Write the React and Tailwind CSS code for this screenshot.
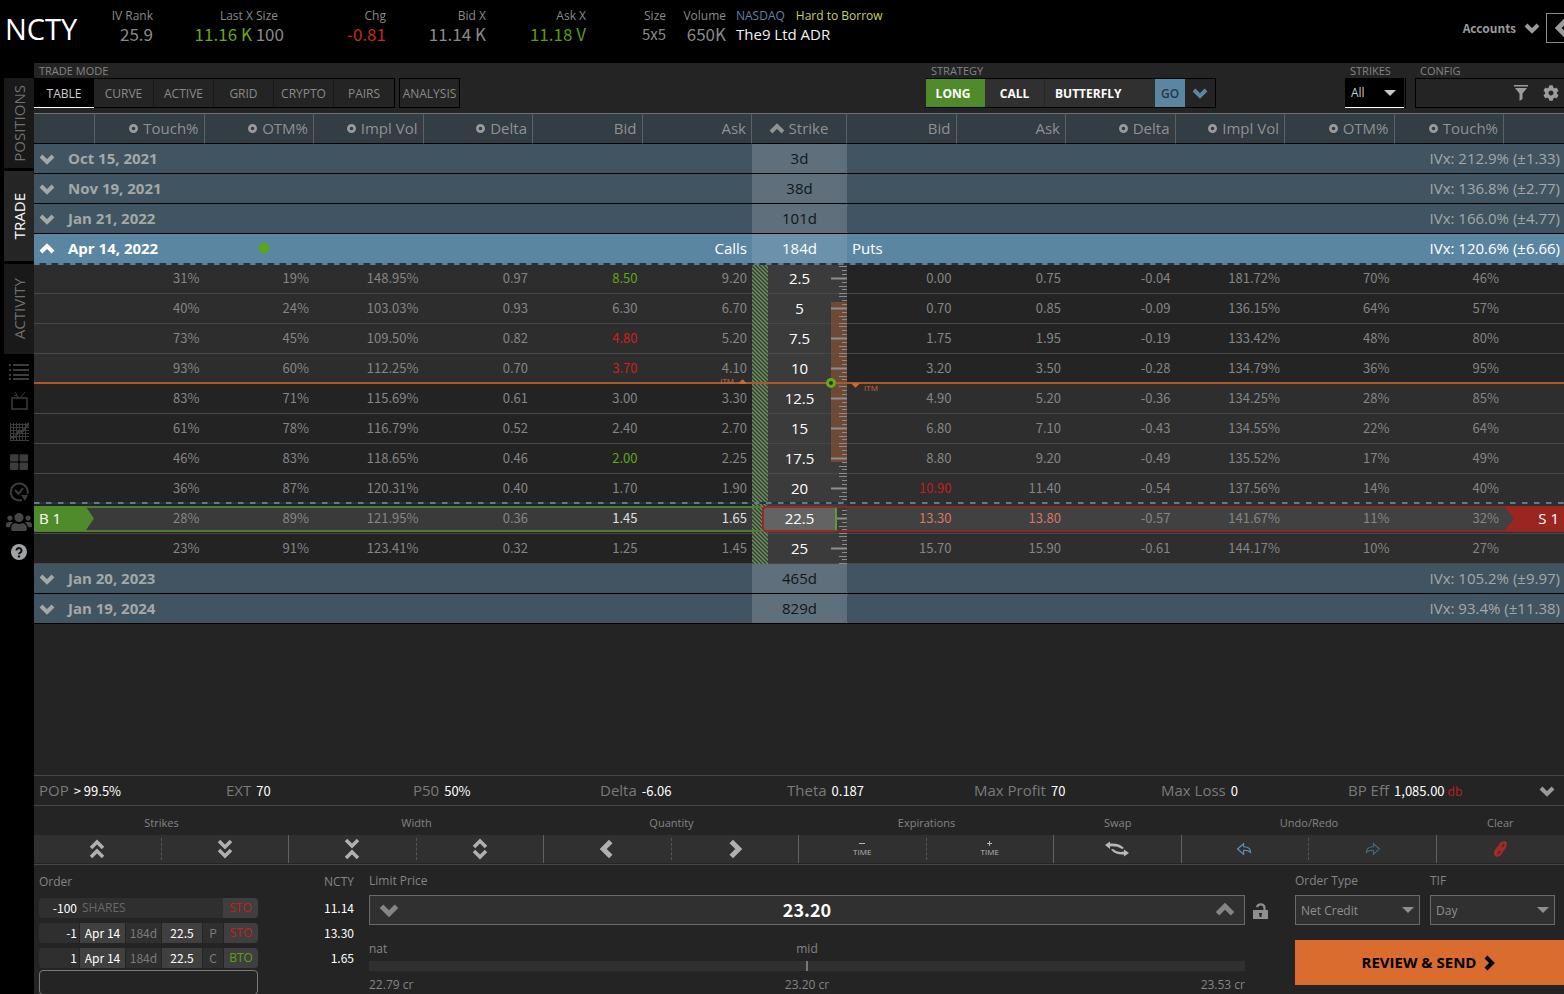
import { FaCog, FaUsers, FaThLarge } from 'react-icons/fa'

const CHEVRON = {
  down: 'M2 5l6 6 6-6',
  up: 'M2 11l6-6 6 6',
  left: 'M11 2L5 8l6 6',
  right: 'M5 2l6 6-6 6',
}

const calls = [
  ['31%', '19%', '148.95%', '0.97', '8.50', '9.20'],
  ['40%', '24%', '103.03%', '0.93', '6.30', '6.70'],
  ['73%', '45%', '109.50%', '0.82', '4.80', '5.20'],
  ['93%', '60%', '112.25%', '0.70', '3.70', '4.10'],
  ['83%', '71%', '115.69%', '0.61', '3.00', '3.30'],
  ['61%', '78%', '116.79%', '0.52', '2.40', '2.70'],
  ['46%', '83%', '118.65%', '0.46', '2.00', '2.25'],
  ['36%', '87%', '120.31%', '0.40', '1.70', '1.90'],
  ['28%', '89%', '121.95%', '0.36', '1.45', '1.65'],
  ['23%', '91%', '123.41%', '0.32', '1.25', '1.45'],
]

const puts = [
  ['0.00', '0.75', '-0.04', '181.72%', '70%', '46%'],
  ['0.70', '0.85', '-0.09', '136.15%', '64%', '57%'],
  ['1.75', '1.95', '-0.19', '133.42%', '48%', '80%'],
  ['3.20', '3.50', '-0.28', '134.79%', '36%', '95%'],
  ['4.90', '5.20', '-0.36', '134.25%', '28%', '85%'],
  ['6.80', '7.10', '-0.43', '134.55%', '22%', '64%'],
  ['8.80', '9.20', '-0.49', '135.52%', '17%', '49%'],
  ['10.90', '11.40', '-0.54', '137.56%', '14%', '40%'],
  ['13.30', '13.80', '-0.57', '141.67%', '11%', '32%'],
  ['15.70', '15.90', '-0.61', '144.17%', '10%', '27%'],
]

const strikes = ['2.5', '5', '7.5', '10', '12.5', '15', '17.5', '20', '22.5', '25']
const SELECTED = 8
const FIRST_OTM_CALL = 4

// last tick direction of a quote, keyed by row and column
const callColors = { '0-4': 'text-[#5fa80f]', '2-4': 'text-[#d0201a]', '3-4': 'text-[#d0201a]', '6-4': 'text-[#5fa80f]', '8-4': 'text-[#e0e0e0]', '8-5': 'text-[#e0e0e0]' }
const putColors = { '7-0': 'text-[#c0201a]', '8-0': 'text-[#d9775f]', '8-1': 'text-[#d9775f]' }

const before = [
  { date: 'Oct 15, 2021', days: '3d', iv: 'IVx: 212.9% (±1.33)' },
  { date: 'Nov 19, 2021', days: '38d', iv: 'IVx: 136.8% (±2.77)' },
  { date: 'Jan 21, 2022', days: '101d', iv: 'IVx: 166.0% (±4.77)' },
]
const after = [
  { date: 'Jan 20, 2023', days: '465d', iv: 'IVx: 105.2% (±9.97)' },
  { date: 'Jan 19, 2024', days: '829d', iv: 'IVx: 93.4% (±11.38)' },
]

const stats = [
  ['POP', '> 99.5%'],
  ['EXT', '70'],
  ['P50', '50%'],
  ['Delta', '-6.06'],
  ['Theta', '0.187'],
  ['Max Profit', '70'],
  ['Max Loss', '0'],
  ['BP Eff', '1,085.00', 'db'],
]

const NUM = "font-['Noto_Sans_CJK_SC','Noto_Sans',sans-serif]"

function Chevron({ dir = 'down', className = 'size-4', width = 4 }) {
  return (
    <svg viewBox="0 0 16 16" className={className} fill="none" stroke="currentColor" strokeWidth={width} aria-hidden="true">
      <path d={CHEVRON[dir]} />
    </svg>
  )
}

function Triangle({ className }) {
  return (
    <svg viewBox="0 0 12 6" className={className} fill="currentColor" aria-hidden="true">
      <path d="M0 0h12L6 6z" />
    </svg>
  )
}

function Quote({ label, value, width, labelClass = '', valueClass = 'text-[#8a8a8a]' }) {
  return (
    <div className={`text-right ${width}`}>
      <div className={`text-xs leading-4 text-[#8a8a8a] ${labelClass}`}>{label}</div>
      <div className={`text-[17px] leading-5 ${NUM} ${valueClass}`}>{value}</div>
    </div>
  )
}

function TopBar() {
  return (
    <header className="flex h-[63px] shrink-0 items-start whitespace-nowrap bg-black pt-2">
      <h1 className="w-[92px] pl-[5px] text-[29px] leading-[42px] text-white">NCTY</h1>
      <Quote label="IV Rank" value="25.9" width="w-[61px]" />
      <Quote
        label="Last X Size"
        labelClass="pr-[6px]"
        value={<><span className="text-[#69a812]">11.16 K</span> 100</>}
        width="w-[131px]"
      />
      <Quote label="Chg" value="-0.81" width="w-[102px]" valueClass="text-[#c42a22]" />
      <Quote label="Bid X" value="11.14 K" width="w-[100px]" />
      <Quote label="Ask X" value="11.18 V" width="w-[100px]" valueClass="text-[#5c9a10]" />
      <div className="w-[80px] text-right text-[#8a8a8a]">
        <div className="text-xs leading-4">Size</div>
        <div className={`text-[15px] leading-5 ${NUM}`}>5x5</div>
      </div>
      <Quote label="Volume" value="650K" width="w-[60px]" />
      <div className="ml-[10px]">
        <div className="flex gap-[11px] text-xs leading-4">
          <span className="text-[#5d84a0]">NASDAQ</span>
          <span className="text-[#c9cf6a]">Hard to Borrow</span>
        </div>
        <div className="text-[15px] leading-5 text-[#f0f0f0]">The9 Ltd ADR</div>
      </div>
      <div className="ml-auto flex h-10 items-center text-[#9a9a9a]">
        <button className={`flex items-center gap-2 text-xs font-bold ${NUM}`}>
          Accounts <Chevron />
        </button>
        <button aria-label="Collapse panel" className="ml-[6px] flex h-[30px] w-[18px] items-center overflow-hidden border border-r-0 border-[#8a8a8a] pl-[5px]">
          <Chevron dir="left" className="size-5 shrink-0" />
        </button>
      </div>
    </header>
  )
}

const sideTab = 'flex h-[90px] w-[30px] items-center justify-center text-[15px] leading-[30px]'

function Sidebar() {
  return (
    <nav className="flex w-[34px] shrink-0 flex-col items-end bg-black pt-[15px] text-[#3c3c3c]">
      <button className={`${sideTab} bg-[#191919] text-[#6f6f6f]`}>
        <span className="rotate-180 [writing-mode:vertical-rl]">POSITIONS</span>
      </button>
      <button className={`${sideTab} mt-[3px] bg-[#252525] text-white`}>
        <span className="rotate-180 [writing-mode:vertical-rl]">TRADE</span>
      </button>
      <button className={`${sideTab} mt-[3px] bg-[#191919] text-[#6f6f6f]`}>
        <span className="rotate-180 [writing-mode:vertical-rl]">ACTIVITY</span>
      </button>
      <div className="mt-[3px] flex w-[30px] flex-col">
        <button aria-label="Watchlist" className="flex h-[30px] items-center justify-center">
          <svg viewBox="0 0 20 18" className="h-[18px] w-5" fill="currentColor">
            <path d="M0 1h2v2H0zM4 1h16v2H4zM0 6h2v2H0zM4 6h16v2H4zM0 11h2v2H0zM4 11h16v2H4zM0 15h2v2H0zM4 15h16v2H4z" />
          </svg>
        </button>
        <button aria-label="Live TV" className="flex h-[30px] items-center justify-center">
          <svg viewBox="0 0 20 20" className="size-5" fill="none" stroke="currentColor">
            <path strokeWidth="1.500" d="M3 6h15v11H3z" />
            <path d="M9 5L6 0M12 5l4-5M5 3l3 1" />
          </svg>
        </button>
        <button aria-label="Charts" className="flex h-[30px] items-center justify-center">
          <svg viewBox="0 0 20 20" className="size-5" fill="none" stroke="currentColor">
            <path d="M1.500 1v18M4.500 1v18M7.500 1v18M10.500 1v18M13.500 1v18M16.500 1v18M1 2.500h19M1 5.500h19M1 8.500h19M1 11.500h19M1 14.500h19M1 18.500h19" />
            <path strokeWidth="2" d="M1 16l5-1 4-6 3 1 6-7" />
            <circle cx="19" cy="2" r="1" fill="currentColor" />
          </svg>
        </button>
        <button aria-label="Dashboard" className="flex h-[30px] items-center justify-center">
          <FaThLarge className="size-[18px]" />
        </button>
        <button aria-label="Quick roll" className="flex h-[30px] items-center justify-center">
          <svg viewBox="0 0 20 20" className="size-5" fill="none" stroke="currentColor" strokeWidth="2">
            <path d="M13 18a8.500 8.500 0 1 1 5.500-6" />
            <path d="M6 8l3.500 4L14 6" />
            <path d="M12 13h7l-3 6z" fill="currentColor" stroke="none" />
          </svg>
        </button>
        <button aria-label="Community" className="flex h-[30px] items-center justify-center">
          <FaUsers className="size-[26px] text-[#464646]" />
        </button>
        <button aria-label="Help" className="flex h-[30px] items-center justify-center">
          <svg viewBox="0 0 16 16" className="size-4">
            <circle cx="8" cy="8" r="8" fill="#a0a3a5" />
            <path d="M5.500 6.500a2.500 2.500 0 1 1 3.800 2.100C8.300 9.200 8 9.500 8 10.300" fill="none" stroke="#111" strokeWidth="2" />
            <circle cx="8" cy="12.400" r="1.200" fill="#111" />
          </svg>
        </button>
      </div>
    </nav>
  )
}

const modeLabel = 'pl-[5px] text-[11px] leading-[15px] text-[#858585]'

function Toolbar() {
  return (
    <div className="flex h-[50px] shrink-0 items-start">
      <div>
        <div className={modeLabel}>TRADE MODE</div>
        <div className="flex h-[30px] text-xs text-[#8a8a8a]">
          <div className="flex border border-l-0 border-black">
            <button className="-my-px w-[60px] border-b border-white bg-black pt-[3px] text-[#d0d0d0]">TABLE</button>
            {['CURVE', 'ACTIVE', 'GRID', 'CRYPTO', 'PAIRS'].map(m => (
              <button key={m} className="w-[60px] border-r border-[#1a1a1a] pt-px last:border-r-0">{m}</button>
            ))}
          </div>
          <button className="ml-1 w-[61px] border border-black pt-px">ANALYSIS</button>
        </div>
      </div>

      <div className="ml-auto">
        <div className={modeLabel}>STRATEGY</div>
        <div className="flex h-[30px] border border-l-0 border-black text-xs font-bold text-white">
          <button className="w-[59px] bg-[#4f8b2b] pr-[5px] pt-px">LONG</button>
          <button className="w-[60px] border-r border-[#262626] bg-[#303030] pt-px">CALL</button>
          <button className="w-[110px] bg-[#303030] pl-[10px] pt-px text-left">BUTTERFLY</button>
          <button className="w-[30px] bg-[#5b86a2] pt-px font-semibold text-[#233846]">GO</button>
          <button aria-label="More strategies" className="flex w-[30px] items-center justify-center text-[#5b86a2]">
            <Chevron />
          </button>
        </div>
      </div>

      <div className="ml-[129px]">
        <label htmlFor="strikes" className={`block ${modeLabel}`}>STRIKES</label>
        <div className="relative h-[30px] w-[61px] border-r border-black text-[#c8c8c8]">
          <select id="strikes" className="h-[30px] w-[59px] appearance-none border-b border-white bg-black pl-[6px] text-xs">
            <option>All</option>
          </select>
          <Triangle className="pointer-events-none absolute right-[9px] top-3 h-[6px] w-3" />
        </div>
      </div>

      <div className="ml-[9px] w-[149px]">
        <div className={modeLabel}>CONFIG</div>
        <div className="flex h-[30px] items-center justify-end gap-[15px] border border-r-0 border-black pr-[5px] text-[#9c9c9c]">
          <button aria-label="Filter">
            <svg viewBox="0 0 14 16" className="h-4 w-[14px]" fill="currentColor">
              <path d="M0 0h14v1.500H0zM1 3h12L8.500 8.500V14l-3 2V8.500z" />
            </svg>
          </button>
          <button aria-label="Settings"><FaCog className="size-4" /></button>
        </div>
      </div>
    </div>
  )
}

const headCell = 'h-[31px] border-b border-b-black border-t border-t-[#6d7072] border-r border-r-[#596268] bg-[#323d44] p-0 pb-[2px] pr-[5px] text-right font-normal'

function HeadCell({ label }) {
  const quote = label === 'Bid' || label === 'Ask'
  return (
    <th className={headCell}>
      <div className="flex items-center justify-end gap-[5px]">
        {!quote && (
          <svg viewBox="0 0 10 10" className="mt-px size-[9px]" fill="none" stroke="#9a9a9a" strokeWidth="3">
            <circle cx="5" cy="5" r="3.500" />
          </svg>
        )}
        {label}
      </div>
    </th>
  )
}

function ExpirationRow({ date, days, iv, open }) {
  const side = open
    ? 'h-[30px] bg-[#5b86a2] p-0 pb-[2px] text-white'
    : 'h-[30px] border-b border-black bg-[#405561] p-0 pb-[2px] text-[#a3a8a8]'
  const mid = open
    ? 'bg-[#6c92ab] p-0 pb-[2px] text-center text-white'
    : 'border-b border-black bg-[#5f707c] p-0 pb-[2px] text-center text-[#10161a]'
  return (
    <tr>
      <td colSpan={7} className={side}>
        <div className="flex items-center">
          <button className="flex items-center gap-[13px] pl-[5px] font-bold">
            <Chevron dir={open ? 'up' : 'down'} className="mt-[2px] size-4" />
            {date}
          </button>
          {open && (
            <>
              <span className="ml-[101px] size-[10px] rounded-full bg-[#5aa70a]" />
              <span className="ml-auto pr-[5px]">Calls</span>
            </>
          )}
        </div>
      </td>
      <td className={mid}>{days}</td>
      <td colSpan={7} className={side}>
        <div className="flex items-center justify-between pl-[5px] pr-1">
          <span>{open && 'Puts'}</span>
          <span>{iv}</span>
        </div>
      </td>
    </tr>
  )
}

function StrikeRow({ i }) {
  const picked = i === SELECTED
  const itmCall = i < FIRST_OTM_CALL
  const line = 'h-[30px] border-b border-[#484848] p-0'
  const callCell = `${line} ${itmCall ? 'bg-[#2d2d2d]' : 'bg-[#232323]'}`
  const putCell = `${line} ${itmCall ? 'bg-[#242424]' : 'bg-[#2e2e2e]'}`
  const num = `pr-[5px] text-right text-[13px] ${NUM}`
  const callBox = picked ? 'h-[26px] border-y-2 border-[#4f7d33] bg-[#3a3a3a] leading-5' : 'pb-[2px] leading-6'
  const putBox = picked ? 'h-[26px] border-y-2 border-[#842a24] bg-[#414141] leading-5' : 'pb-[2px] leading-6'
  return (
    <tr>
      <td className={callCell}>
        {picked && (
          <div className="h-[26px] border-y-2 border-[#4f7d33] bg-[#3a3a3a]">
            <div className="-my-[2px] h-[26px] bg-[#4f8b2b] pl-[5px] leading-6 text-white [clip-path:polygon(0_0,51px_0,60px_50%,51px_100%,0_100%)]">B 1</div>
          </div>
        )}
      </td>
      {calls[i].map((v, c) => (
        <td key={c} className={callCell}>
          <div className={`${num} ${callBox} ${callColors[`${i}-${c}`] || 'text-[#858585]'}`}>{v}</div>
        </td>
      ))}
      <td className={`${line} bg-[#3b3b3b] text-center text-white`}>
        {picked ? (
          <div className="relative z-10 flex h-[26px]">
            <div className="w-[10px] border-y-2 border-[#4f7d33]" />
            <div className="flex-1 rounded-sm border-2 border-[#9a2a26] border-r-[#5d9a3a] bg-[#636363] leading-5">22.5</div>
            <div className="w-[10px] border-y-2 border-[#842a24]" />
          </div>
        ) : (
          <div className="pb-[2px]">{strikes[i]}</div>
        )}
      </td>
      {puts[i].map((v, c) => (
        <td key={c} className={putCell}>
          <div className={`${num} ${putBox} ${putColors[`${i}-${c}`] || 'text-[#858585]'}`}>{v}</div>
        </td>
      ))}
      <td className={putCell}>
        {picked && (
          <div className="h-[26px] border-y-2 border-[#842a24] bg-[#414141]">
            <div className="-my-[2px] h-[26px] bg-[#9a261f] pr-[5px] text-right leading-6 text-white [clip-path:polygon(0_0,100%_0,100%_100%,0_100%,10px_50%)]">S 1</div>
          </div>
        )}
      </td>
    </tr>
  )
}

// hatched call side, price ruler and expected move band over the strike column
function StrikeOverlay() {
  return (
    <svg className="h-[300px] w-[95px]" viewBox="0 0 95 300" aria-hidden="true">
      <defs>
        <pattern id="hatch" width="4" height="4" patternUnits="userSpaceOnUse">
          <path d="M-1 -1l6 6M-1 3l2 2M3 -1l2 2" stroke="#6a9656" strokeWidth="1.300" />
        </pattern>
        <pattern id="ticks" width="16" height="30" patternUnits="userSpaceOnUse" x="79">
          <path d="M8 2.500h8M11 6.500h5M11 10.500h5M11 18.500h5M8 22.500h8M11 25.500h5M8 29.500h8" stroke="#8b8b8b" />
          <path d="M0 14.500h16" stroke="#8e8e8e" strokeWidth="2" />
        </pattern>
      </defs>
      <rect width="16" height="300" fill="url(#hatch)" />
      <rect x="79" y="38" width="16" height="160" fill="#8f5433" fillOpacity=".6" />
      <rect x="79" width="16" height="300" fill="url(#ticks)" />
    </svg>
  )
}

const dashes = 'h-[2px] bg-[repeating-linear-gradient(90deg,#5f7d8f_0,#5f7d8f_5px,#22333f_6px,#22333f_12px)]'

function OptionChain() {
  const heads = ['Touch%', 'OTM%', 'Impl Vol', 'Delta', 'Bid', 'Ask']
  return (
    <div className="relative shrink-0">
      <table className="w-full table-fixed border-separate border-spacing-0 whitespace-nowrap text-[15px] leading-5">
        <colgroup>
          <col className="w-[61px]" />
          {heads.map(h => <col key={h} />)}
          <col className="w-[95px]" />
          {heads.map(h => <col key={h} />)}
          <col className="w-[60px]" />
        </colgroup>
        <thead className="text-[#8f9291]">
          <tr>
            <td className={headCell} />
            {heads.map(h => <HeadCell key={h} label={h} />)}
            <th className={headCell}>
              <div className="flex items-center justify-center gap-1 pl-1">
                <Chevron dir="up" className="mt-[2px] size-4" /> Strike
              </div>
            </th>
            {['Bid', 'Ask', 'Delta', 'Impl Vol', 'OTM%', 'Touch%'].map(h => <HeadCell key={h} label={h} />)}
            <td className={`${headCell} border-r-0`} />
          </tr>
        </thead>
        <tbody>
          {before.map(e => <ExpirationRow key={e.date} {...e} />)}
          <ExpirationRow date="Apr 14, 2022" days="184d" iv="IVx: 120.6% (±6.66)" open />
          {strikes.map((s, i) => <StrikeRow key={s} i={i} />)}
          {after.map(e => <ExpirationRow key={e.date} {...e} />)}
        </tbody>
      </table>

      <div className="pointer-events-none absolute inset-x-0 top-[151px] h-[300px]">
        <div className="flex justify-center pl-px"><StrikeOverlay /></div>
        <div className={`absolute inset-x-0 -top-px ${dashes}`} />
        <div className={`absolute inset-x-0 top-[238px] ${dashes}`} />
        <div className="absolute inset-x-0 top-[118px] flex h-[2px] items-center justify-center bg-[#a9592f] text-[#cf6a34]">
          <div className="mb-1 mr-[5px] flex flex-1 items-center justify-end gap-1 text-[8px] leading-[8px]">
            ITM <Triangle className="h-[5px] w-[9px] rotate-180" />
          </div>
          <div className="flex w-[95px] shrink-0 justify-end pr-[11px]">
            <svg viewBox="0 0 10 10" className="size-[10px]" fill="#263010" stroke="#68a812" strokeWidth="3">
              <circle cx="5" cy="5" r="3.500" />
            </svg>
          </div>
          <div className="ml-1 mt-[9px] flex flex-1 items-start gap-1 text-[8px] leading-[10px]">
            <Triangle className="h-[5px] w-[9px]" /> ITM
          </div>
        </div>
      </div>
    </div>
  )
}

function StatsBar() {
  return (
    <div className="flex h-[31px] shrink-0 items-center border-y border-[#454545]">
      <dl className="grid flex-1 grid-cols-8 whitespace-nowrap">
        {stats.map(([label, value, unit]) => (
          <div key={label} className="flex items-baseline gap-[5px] pl-[5px] leading-5">
            <dt className="text-[15px] text-[#7a7a7a]">{label}</dt>
            <dd className={`text-[13px] text-white ${NUM}`}>
              {value} {unit && <span className="text-xs text-[#b3201c]">{unit}</span>}
            </dd>
          </div>
        ))}
      </dl>
      <button aria-label="More metrics" className="flex w-[34px] justify-center text-[#9a9a9a]"><Chevron /></button>
    </div>
  )
}

function DoubleChevron({ paths }) {
  return (
    <svg viewBox="0 0 16 22" className="h-[22px] w-4" fill="none" stroke="#b0b0b0" strokeWidth="3.500" aria-hidden="true">
      <path d={paths} />
    </svg>
  )
}

function TimeIcon({ d }) {
  return (
    <span className="flex flex-col items-center text-[8px] leading-[10px] text-[#b5b5b5]">
      <svg viewBox="0 0 6 6" className="size-[6px]" fill="none" stroke="currentColor"><path d={d} /></svg>
      TIME
    </span>
  )
}

const arrowPath = 'M1 8l7-6v3.500c5 0 8 2.500 8 6.500-2-2-4.500-2.500-8-2.500V14z'

const tools = [
  { name: 'Strikes', span: 'col-span-2', items: [
    ['Strikes up', <DoubleChevron paths="M2 10l6-6 6 6M2 19l6-6 6 6" />],
    ['Strikes down', <DoubleChevron paths="M2 3l6 6 6-6M2 12l6 6 6-6" />],
  ] },
  { name: 'Width', span: 'col-span-2', items: [
    ['Narrower', <DoubleChevron paths="M2 2l6 6 6-6M2 20l6-6 6 6" />],
    ['Wider', <DoubleChevron paths="M2 9l6-6 6 6M2 13l6 6 6-6" />],
  ] },
  { name: 'Quantity', span: 'col-span-2', items: [
    ['Decrease quantity', <Chevron dir="left" className="size-5 text-[#b0b0b0]" />],
    ['Increase quantity', <Chevron dir="right" className="size-5 text-[#b0b0b0]" />],
  ] },
  { name: 'Expirations', span: 'col-span-2', items: [
    ['Earlier expiration', <TimeIcon d="M0 2.500h6" />],
    ['Later expiration', <TimeIcon d="M0 2.500h5M2.500 0v5" />],
  ] },
  { name: 'Swap', span: 'col-span-1', items: [
    ['Swap', (
      <svg viewBox="0 0 26 16" className="h-4 w-[26px]" fill="#b8b8b8">
        <path d="M1 4l5-3.500v2c6 0 10 .5 14 4.500l-2 1C14 5.500 10 5 6 5.500V8zM25 12l-5 3.500v-2c-6 0-10-1-13-5l2-.5c3 2.500 7 3.500 11 2.500V8.500z" />
      </svg>
    )],
  ] },
  { name: 'Undo/Redo', span: 'col-span-2', items: [
    ['Undo', <svg viewBox="0 0 18 16" className="h-[14px] w-[17px]" fill="none" stroke="#5f95b5" strokeWidth="1.200"><path d={arrowPath} /></svg>],
    ['Redo', <svg viewBox="0 0 18 16" className="h-[14px] w-[17px] -scale-x-100" fill="none" stroke="#456b80" strokeWidth="1.200"><path d={arrowPath} /></svg>],
  ] },
  { name: 'Clear', span: 'col-span-1', items: [
    ['Clear', (
      <svg viewBox="0 0 14 18" className="h-[18px] w-[14px]">
        <path d="M8 2l4-1 2 2-1 5-6 8-3 1-3-2v-4z" fill="#a32b24" />
        <path d="M9 7l2-3M5 14l2-3" stroke="#2f2f2f" strokeWidth="1.500" fill="none" />
      </svg>
    )],
  ] },
]

function ToolStrip() {
  return (
    <div className="grid h-[59px] shrink-0 grid-cols-12 border-b border-[#454545]">
      {tools.map(t => (
        <div key={t.name} className={`group ${t.span}`}>
          <div className="h-[29px] pt-[6px] text-center text-[11px] leading-[22px] text-[#858585]">{t.name}</div>
          <div className="flex h-7 items-center border-r border-[#626262] bg-[#303030] group-last:border-r-0">
            {t.items.map(([label, icon]) => (
              <button
                key={label}
                aria-label={label}
                className="flex h-[22px] flex-1 items-center justify-center border-r border-dashed border-[#555] last:border-r-0"
              >
                {icon}
              </button>
            ))}
          </div>
        </div>
      ))}
    </div>
  )
}

const legs = [
  { qty: '-1', type: 'P', action: 'STO', color: 'text-[#c4201c]' },
  { qty: '1', type: 'C', action: 'BTO', color: 'text-[#5fa010]' },
]

function OrderLegs() {
  return (
    <div className="w-[219px]">
      <div className="mb-[7px] text-xs leading-[18px] text-[#858585]">Order</div>
      <div className="flex flex-col gap-[5px] text-xs leading-5">
        <div className="flex rounded-sm bg-[#2f2f2f]">
          <span className={`w-[38px] text-right text-white ${NUM}`}>-100</span>
          <span className="flex-1 pl-[5px] text-[#696969]">SHARES</span>
          <button className="w-[35px] rounded-r-sm bg-[#3f3f3f] text-[#c4201c]">STO</button>
        </div>
        {legs.map(l => (
          <div key={l.qty} className={`flex gap-px ${NUM}`}>
            <span className="w-[40px] rounded-l-sm bg-[#2f2f2f] pr-[2px] text-right text-white">{l.qty}</span>
            <button className="w-[45px] bg-[#404040] text-white">Apr 14</button>
            <span className="w-[35px] bg-[#2f2f2f] text-center text-[#7a7a7a]">184d</span>
            <button className="w-[40px] bg-[#404040] text-white">22.5</button>
            <span className="w-[20px] bg-[#2f2f2f] text-center text-[#7a7a7a]">{l.type}</span>
            <button className={`flex-1 rounded-r-sm bg-[#3f3f3f] font-['Open_Sans',sans-serif] ${l.color}`}>{l.action}</button>
          </div>
        ))}
      </div>
      <input aria-label="Add leg" className="mt-[2px] block h-[25px] w-full rounded-sm border border-[#7a7a7a] bg-transparent px-2 text-xs text-white outline-none" />
    </div>
  )
}

function Select({ id, label, value }) {
  return (
    <div className="flex-1">
      <label htmlFor={id} className="mb-[5px] block text-xs leading-[18px] text-[#858585]">{label}</label>
      <div className="relative text-[#8f8f8f]">
        <select id={id} className="h-[30px] w-full appearance-none border border-[#696969] bg-[#303030] pl-[5px] pt-px text-xs">
          <option>{value}</option>
        </select>
        <Triangle className="pointer-events-none absolute right-[6px] top-3 h-[6px] w-3" />
      </div>
    </div>
  )
}

function OrderTicket() {
  return (
    <div className="flex h-[129px] shrink-0 items-start overflow-hidden pl-[5px]">
      <div className="pt-2"><OrderLegs /></div>
      <div className="w-[96px] pt-2 text-right">
        <div className="mb-[7px] text-xs leading-[18px] text-[#858585]">NCTY</div>
        <div className={`flex flex-col gap-[5px] text-xs leading-5 text-white ${NUM}`}>
          <span>11.14</span>
          <span>13.30</span>
          <span>1.65</span>
        </div>
      </div>

      <div className="ml-[15px] flex-1 pt-[7px] text-xs leading-[18px] text-[#858585]">
        <label htmlFor="limit" className="mb-[5px] block">Limit Price</label>
        <div className="flex h-[30px] items-center border border-[#696969] bg-[#303030] px-[9px]">
          <button aria-label="Lower price"><Chevron className="size-5" /></button>
          <input id="limit" defaultValue="23.20" className={`min-w-0 flex-1 bg-transparent pb-[2px] text-center text-lg font-bold leading-6 text-white outline-none ${NUM}`} />
          <button aria-label="Raise price"><Chevron dir="up" className="size-5" /></button>
        </div>
        <div className="mt-[15px] grid grid-cols-3">
          <span>nat</span>
          <span className="text-center">mid</span>
        </div>
        <div className="mt-[3px] flex h-[10px] justify-center bg-[#303030]">
          <span className="w-[2px] bg-[#777]" />
        </div>
        <div className="mt-[5px] grid grid-cols-3">
          <span>22.79 cr</span>
          <span className="text-center">23.20 cr</span>
          <span className="text-right">23.53 cr</span>
        </div>
      </div>

      <button aria-label="Lock price" className="ml-2 mt-[37px] text-[#8f8f8f]">
        <svg viewBox="0 0 15 18" className="h-[18px] w-[15px]" fill="currentColor">
          <path d="M0 8h15v9H0z" />
          <path d="M4 8V5.500a3.800 3.800 0 0 1 7.500 0V8" fill="none" stroke="currentColor" strokeWidth="2.200" />
          <path d="M2.500 5.200h3V8h-3z" fill="#242424" />
          <path d="M6 11h3v1.500H8.500V15h-2v-2.500H6z" fill="#242424" />
        </svg>
      </button>

      <div className="ml-[27px] w-[269px] pt-[7px]">
        <div className="flex gap-[10px] pr-[9px]">
          <Select id="order-type" label="Order Type" value="Net Credit" />
          <Select id="tif" label="TIF" value="Day" />
        </div>
        <button className="mt-[15px] flex h-[45px] w-full items-center justify-center gap-[5px] bg-[#d96c2e] text-[15px] font-bold text-black">
          REVIEW &amp; SEND <Chevron dir="right" />
        </button>
      </div>
    </div>
  )
}

export default function App() {
  return (
    <div className="flex h-screen flex-col overflow-hidden bg-[#242424] font-['Open_Sans','Noto_Sans',sans-serif]">
      <TopBar />
      <div className="flex min-h-0 flex-1">
        <Sidebar />
        <main className="flex min-w-0 flex-1 flex-col">
          <Toolbar />
          <div className="min-h-0 flex-1 overflow-hidden">
            <OptionChain />
          </div>
          <StatsBar />
          <ToolStrip />
          <OrderTicket />
        </main>
      </div>
    </div>
  )
}
